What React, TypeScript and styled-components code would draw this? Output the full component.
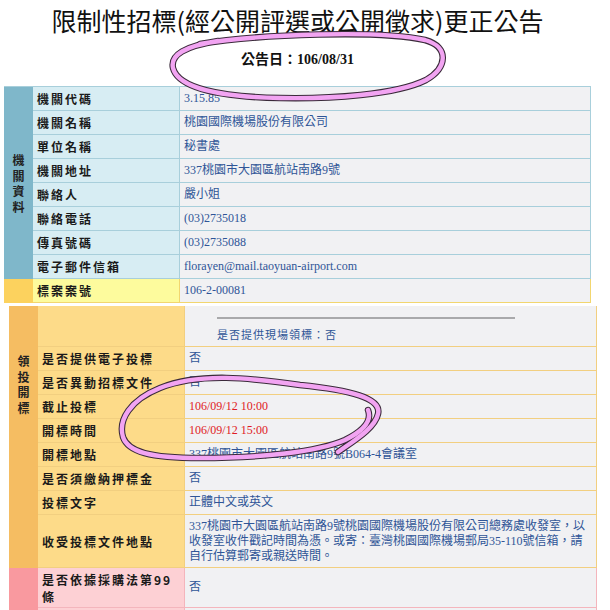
import React from "react";
import styled, { createGlobalStyle } from "styled-components";

const Global = createGlobalStyle`
  html, body { margin: 0; padding: 0; background: #ffffff; }
  body { font-family: "Noto Sans CJK TC", sans-serif; }
  * { box-sizing: border-box; }
`;

type Tone = "blue" | "yellow" | "orange" | "pink";
const tones: Record<Tone, { group: string; label: string; line: string }> = {
  blue: { group: "#7fb7ca", label: "#d7edf3", line: "#a8cfdb" },
  yellow: { group: "#fcd25e", label: "#fdfb9d", line: "#f2d66f" },
  orange: { group: "#f5bd62", label: "#fddb89", line: "#f2cf80" },
  pink: { group: "#f9999f", label: "#fdd0d4", line: "#f4b5bc" },
};

const Page = styled.div`
  position: relative;
  width: 610px;
  height: 610px;
  overflow: hidden;
  background: #fff;
`;

const Title = styled.h1`
  margin: 0;
  padding: 5px 15px 0 0;
  height: 40px;
  text-align: center;
  font-family: "Noto Sans CJK TC", sans-serif;
  font-size: 25px;
  font-weight: 400;
  line-height: 31px;
  color: #111;
`;

const DateLine = styled.div`
  margin: 10px 0 16px;
  padding-right: 15px;
  height: 20px;
  line-height: 20px;
  text-align: center;
  font-family: "Liberation Serif", "Noto Sans CJK TC", serif;
  font-size: 14px;
  font-weight: 700;
  color: #111;
`;

const Panel = styled.div<{ $left: number; $width: number; $gap?: number }>`
  margin-left: ${(p) => p.$left}px;
  margin-top: ${(p) => p.$gap ?? 0}px;
  width: ${(p) => p.$width}px;
  display: flex;
  flex-direction: column;
`;

const Block = styled.div<{ $tone: Tone; $top?: boolean }>`
  display: grid;
  grid-template-columns: 29px 1fr;
  border-top: ${(p) => (p.$top ? `1px solid ${tones[p.$tone].line}` : "none")};
`;

const Group = styled.div<{ $tone: Tone; $pad?: number }>`
  background: ${(p) => tones[p.$tone].group};
  display: flex;
  flex-direction: column;
  align-items: center;
  justify-content: ${(p) => (p.$pad !== undefined ? "flex-start" : "center")};
  padding-top: ${(p) => p.$pad ?? 0}px;
  font-size: 12px;
  font-weight: 700;
  line-height: 15.5px;
  color: #222;
`;

const Rows = styled.div`
  display: flex;
  flex-direction: column;
`;

const Row = styled.div<{ $tone: Tone; $h: number }>`
  display: grid;
  grid-template-columns: 147px 1fr;
  height: ${(p) => p.$h}px;
  border-bottom: 1px solid ${(p) => tones[p.$tone].line};
`;

const Label = styled.div<{ $tone: Tone }>`
  background: ${(p) => tones[p.$tone].label};
  border-right: 1px solid ${(p) => tones[p.$tone].line};
  padding: 0 8px 0 4px;
  display: flex;
  align-items: center;
  font-size: 12px;
  font-weight: 700;
  letter-spacing: 2px;
  line-height: 17px;
  color: #1a1a1a;
`;

const Value = styled.div<{ $tone: Tone; $red?: boolean; $top?: boolean }>`
  background: #f1f1f3;
  border-right: 1px solid ${(p) => tones[p.$tone].line};
  padding: ${(p) => (p.$top ? "11px 6px 0 4px" : "0 6px 0 4px")};
  display: flex;
  flex-direction: ${(p) => (p.$top ? "column" : "row")};
  align-items: ${(p) => (p.$top ? "flex-start" : "center")};
  font-family: "Liberation Serif", "Noto Sans CJK TC", serif;
  font-size: 12px;
  line-height: 15px;
  color: ${(p) => (p.$red ? "#e01b24" : "#2f5597")};
`;

const Rule = styled.div`
  margin-left: 28px;
  width: 298px;
  height: 2px;
  background: #a9a9ab;
`;

const Note = styled.div`
  margin: 8px 0 0 28px;
  font-family: "Noto Sans CJK TC", sans-serif;
  font-size: 11px;
  letter-spacing: 1px;
`;

const Overlay = styled.svg`
  position: absolute;
  left: 0;
  top: 0;
  width: 610px;
  height: 610px;
  pointer-events: none;
`;

type Item = { label: string; value: React.ReactNode; h?: number; red?: boolean };

const agency: Item[] = [
  { label: "機關代碼", value: "3.15.85" },
  { label: "機關名稱", value: "桃園國際機場股份有限公司" },
  { label: "單位名稱", value: "秘書處" },
  { label: "機關地址", value: "337桃園市大園區航站南路9號" },
  { label: "聯絡人", value: "嚴小姐" },
  { label: "聯絡電話", value: "(03)2735018" },
  { label: "傳真號碼", value: "(03)2735088" },
  { label: "電子郵件信箱", value: "florayen@mail.taoyuan-airport.com" },
];

const bidding: Item[] = [
  { label: "是否提供電子投標", value: "否" },
  { label: "是否異動招標文件", value: "否" },
  { label: "截止投標", value: "106/09/12 10:00", red: true },
  { label: "開標時間", value: "106/09/12 15:00", red: true },
  { label: "開標地點", value: "337桃園市大園區航站南路9號B064-4會議室" },
  { label: "是否須繳納押標金", value: "否" },
  { label: "投標文字", value: "正體中文或英文" },
  {
    label: "收受投標文件地點",
    h: 53,
    value: (
      <span>
        337桃園市大園區航站南路9號桃園國際機場股份有限公司總務處收發室，以
        <br />
        收發室收件戳記時間為憑。或寄：臺灣桃園國際機場郵局35-110號信箱，請
        <br />
        自行估算郵寄或親送時間。
      </span>
    ),
  },
];

const VerticalText = ({ text }: { text: string }) => (
  <>
    {text.split("").map((c, i) => (
      <span key={i}>{c}</span>
    ))}
  </>
);

const renderRows = (items: Item[], tone: Tone, h = 24) =>
  items.map((it) => (
    <Row key={it.label} $tone={tone} $h={it.h ?? h}>
      <Label $tone={tone}>{it.label}</Label>
      <Value $tone={tone} $red={it.red}>
        {it.value}
      </Value>
    </Row>
  ));

const stroke = (d: string) => (
  <>
    <path d={d} fill="none" stroke="#3a2a3a" strokeWidth={6.5} strokeLinecap="round" strokeLinejoin="round" />
    <path d={d} fill="none" stroke="#f2a4f2" strokeWidth={4.4} strokeLinecap="round" strokeLinejoin="round" />
  </>
);

export default function App() {
  return (
    <Page>
      <Global />
      <Title>限制性招標(經公開評選或公開徵求)更正公告</Title>
      <DateLine>公告日：106/08/31</DateLine>

      <Panel $left={4} $width={587}>
        <Block $tone="blue" $top>
          <Group $tone="blue">
            <VerticalText text="機關資料" />
          </Group>
          <Rows>{renderRows(agency, "blue")}</Rows>
        </Block>
        <Block $tone="yellow">
          <Group $tone="yellow" />
          <Rows>{renderRows([{ label: "標案案號", value: "106-2-00081" }], "yellow")}</Rows>
        </Block>
      </Panel>

      <Panel $left={9} $width={588} $gap={3}>
        <Block $tone="orange">
          <Group $tone="orange" $pad={47}>
            <VerticalText text="領投開標" />
          </Group>
          <Rows>
            <Row $tone="orange" $h={41}>
              <Label $tone="orange" />
              <Value $tone="orange" $top>
                <Rule />
                <Note>是否提供現場領標：否</Note>
              </Value>
            </Row>
            {renderRows(bidding, "orange")}
          </Rows>
        </Block>
        <Block $tone="pink">
          <Group $tone="pink" />
          <Rows>
            {renderRows([{ label: "是否依據採購法第99條", value: "否", h: 40 }], "pink")}
            <Row $tone="pink" $h={24}>
              <Label $tone="pink" />
              <Value $tone="pink" />
            </Row>
          </Rows>
        </Block>
      </Panel>

      <Overlay viewBox="0 0 610 610">
        {stroke(
          "M200 44 C260 34 380 30 425 40 C450 47 447 68 426 80 C396 95 330 99 280 98 C220 97 178 88 173 68 C170 55 185 46 218 41"
        )}
        {stroke(
          "M338 452 C355 440 375 428 378 414 C382 398 350 390 300 385 C250 378 200 372 160 388 C130 400 118 420 123 437 C128 452 150 458 200 458 C260 458 318 452 345 440 C365 430 372 420 368 410"
        )}
      </Overlay>
    </Page>
  );
}
